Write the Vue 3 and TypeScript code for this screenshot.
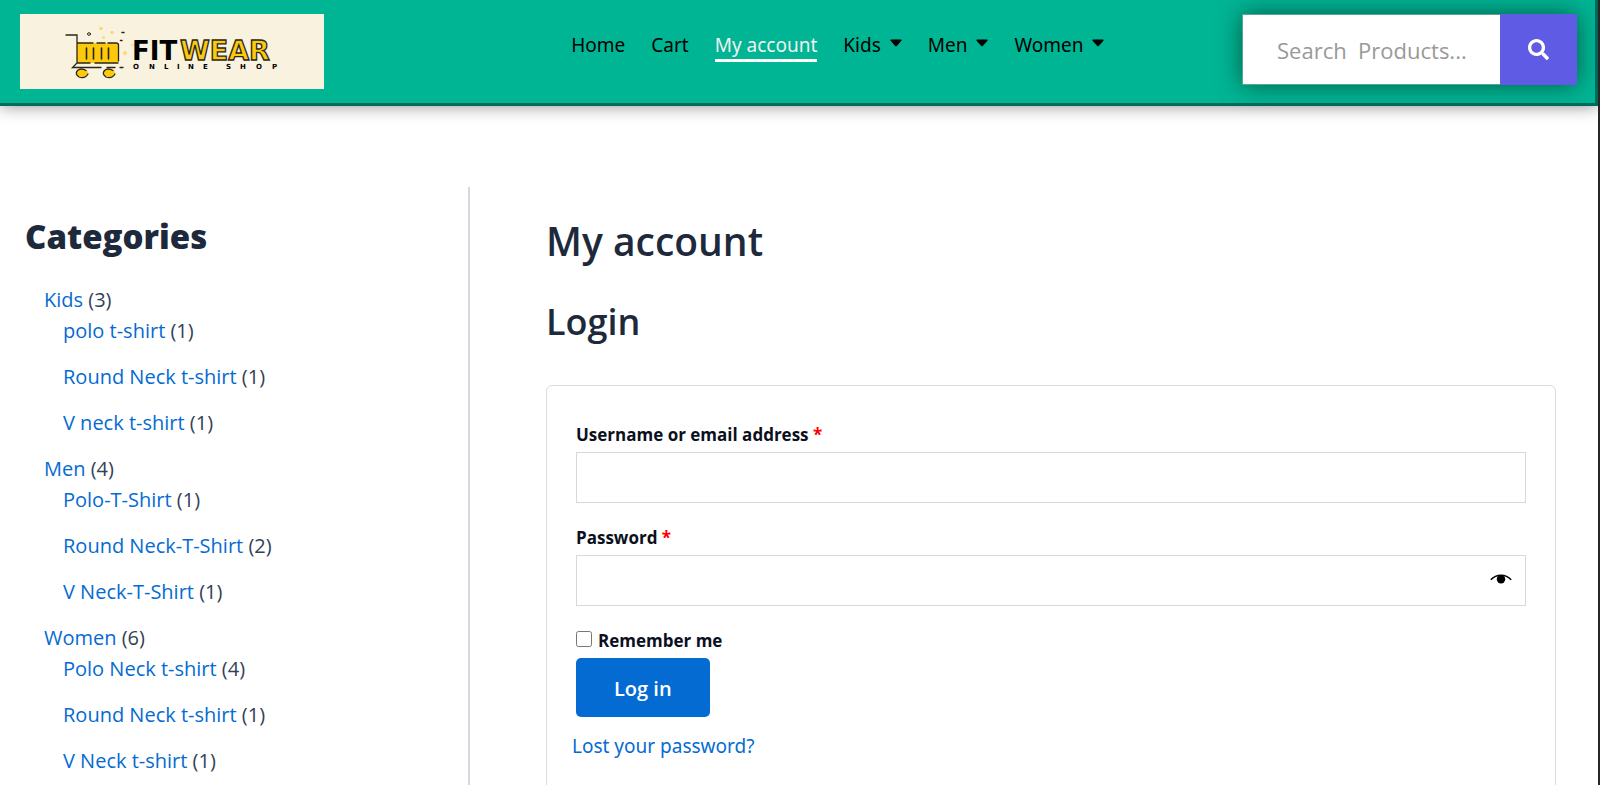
<script setup lang="ts">
import { ref } from 'vue'

interface NavItem {
  label: string
  active?: boolean
  menu?: boolean
}

interface Category {
  name: string
  count: number
  children?: Category[]
}

const nav: NavItem[] = [
  { label: 'Home' },
  { label: 'Cart' },
  { label: 'My account', active: true },
  { label: 'Kids', menu: true },
  { label: 'Men', menu: true },
  { label: 'Women', menu: true },
]

const categories: Category[] = [
  {
    name: 'Kids',
    count: 3,
    children: [
      { name: 'polo t-shirt', count: 1 },
      { name: 'Round Neck t-shirt', count: 1 },
      { name: 'V neck t-shirt', count: 1 },
    ],
  },
  {
    name: 'Men',
    count: 4,
    children: [
      { name: 'Polo-T-Shirt', count: 1 },
      { name: 'Round Neck-T-Shirt', count: 2 },
      { name: 'V Neck-T-Shirt', count: 1 },
    ],
  },
  {
    name: 'Women',
    count: 6,
    children: [
      { name: 'Polo Neck t-shirt', count: 4 },
      { name: 'Round Neck t-shirt', count: 1 },
      { name: 'V Neck t-shirt', count: 1 },
    ],
  },
]

const search = ref('')
const username = ref('')
const password = ref('')
const remember = ref(false)
const showPassword = ref(false)
</script>

<template>
  <div class="page">
    <header class="header">
      <a class="logo" href="#" aria-label="Fitwear Online Shop">
        <svg viewBox="0 0 304 75" width="304" height="75" aria-hidden="true">
          <g fill="#fdc90c">
            <rect x="57" y="29" width="41" height="20" rx="1" />
            <ellipse cx="62" cy="59" rx="6" ry="4" />
            <ellipse cx="89" cy="59" rx="6" ry="4" />
          </g>
          <g fill="none" stroke="#2b2618" stroke-width="1.3" stroke-linecap="round">
            <path d="M46 21H57V49M57 29H73M77 29H85M88 29H96Q98.500 29 98.500 31V47M57 49H70M75 49H98M57 49L52.500 53.500H81M87 53.500H95M100 53.500H103" />
            <path d="M66.500 34V45M73.500 34V45M81.500 34V45M88.500 34V45" stroke-width="1.600" />
            <path d="M66 56.500Q61 53.500 57.500 56.500Q54.500 60 59 63Q65 65 68 60M93 56.500Q88 53.500 84.500 56.500Q81.500 60 86 63Q92 65 95 60" />
            <ellipse cx="69" cy="20" rx="1.500" ry="1.300" stroke-width="1" />
            <path d="M102 18.500H104M100.500 26.500H102" stroke-width="1.500" />
          </g>
          <g fill="#fbe28a" stroke="#f7d04b" stroke-width=".8">
            <ellipse cx="81" cy="14.500" rx="1.500" ry="1" />
            <ellipse cx="92" cy="18.500" rx="1.500" ry="1" />
            <ellipse cx="83.500" cy="23.500" rx="1.300" ry=".8" />
            <ellipse cx="105" cy="39" rx="1.500" ry="1.500" />
            <path d="M111 31H115" />
          </g>
          <text x="112" y="46" class="logo-name">FIT</text>
          <text x="160" y="46" class="logo-name logo-wear">WEAR</text>
          <text x="113 129 144 157 168 183 206 206 220 236 252" y="55" class="logo-sub">ONLINE SHOP</text>
        </svg>
      </a>

      <nav class="nav" aria-label="Main">
        <a v-for="item in nav" :key="item.label" href="#" class="nav-link" :class="{ active: item.active }">
          {{ item.label }}
          <svg v-if="item.menu" class="caret" viewBox="0 0 12 8" width="12" height="8" aria-hidden="true">
            <path d="M1 .5H11Q12 .8 11.400 1.800L7 6.800Q6 7.800 5 6.800L.6 1.800Q0 .8 1 .5Z" fill="currentColor" />
          </svg>
        </a>
      </nav>

      <form class="search" role="search" @submit.prevent>
        <input v-model="search" type="text" aria-label="Search products" placeholder="Search&nbsp; Products..." />
        <button type="submit" aria-label="Search">
          <svg viewBox="0 0 512 512" width="21" height="21" aria-hidden="true">
            <path
              fill="currentColor"
              d="M505 442.700L405.300 343c-4.500-4.500-10.600-7-17-7H372c27.600-35.300 44-79.700 44-128C416 93.100 322.900 0 208 0S0 93.100 0 208s93.100 208 208 208c48.300 0 92.700-16.400 128-44v16.300c0 6.400 2.500 12.500 7 17l99.700 99.700c9.400 9.400 24.600 9.400 33.900 0l28.300-28.300c9.400-9.400 9.400-24.600.1-34zM208 336c-70.700 0-128-57.200-128-128 0-70.700 57.200-128 128-128 70.700 0 128 57.200 128 128 0 70.700-57.200 128-128 128z"
            />
          </svg>
        </button>
      </form>
    </header>

    <div class="content">
      <aside class="sidebar">
        <h2 class="side-title">Categories</h2>
        <ul class="cats">
          <li v-for="cat in categories" :key="cat.name">
            <a href="#">{{ cat.name }}</a> ({{ cat.count }})
            <ul class="subcats">
              <li v-for="sub in cat.children" :key="sub.name">
                <a href="#">{{ sub.name }}</a> ({{ sub.count }})
              </li>
            </ul>
          </li>
        </ul>
      </aside>

      <main class="main">
        <h1>My account</h1>
        <h2>Login</h2>
        <form class="card" @submit.prevent>
          <div class="field">
            <label for="username">Username or email address <span class="req">*</span></label>
            <input id="username" v-model="username" type="text" />
          </div>
          <div class="field">
            <label for="password">Password <span class="req">*</span></label>
            <div class="password">
              <input id="password" v-model="password" :type="showPassword ? 'text' : 'password'" />
              <button class="eye" type="button" aria-label="Show password" @click="showPassword = !showPassword">
                <svg viewBox="0 0 22 10" width="22" height="10" aria-hidden="true">
                  <path d="M.8 5.800Q5 1.300 11 1.300T21.200 5.800" fill="none" stroke="#000" stroke-width="1.500" />
                  <circle cx="11" cy="5.300" r="4.200" />
                </svg>
              </button>
            </div>
          </div>
          <label class="remember">
            <input v-model="remember" type="checkbox" />
            <span>Remember me</span>
          </label>
          <button class="submit" type="submit">Log in</button>
          <a class="lost" href="#">Lost your password?</a>
        </form>
      </main>
    </div>
  </div>
</template>

<style>
body {
  margin: 0;
  background: #fff;
}
</style>

<style scoped>
.page {
  box-sizing: border-box;
  height: 100vh;
  overflow: hidden;
  display: flex;
  flex-direction: column;
  border-right: 2px solid #262626;
  font-family: "Noto Sans", "Open Sans", sans-serif;
  font-size: 19px;
  color: #334155;
}

a {
  color: #046bd2;
  text-decoration: none;
}

.header {
  box-sizing: border-box;
  flex: none;
  display: grid;
  grid-template-columns: 7fr auto 6fr;
  align-items: start;
  padding: 14px 18px 14px 20px;
  background: #00b594;
  border-right: 3px solid #006a5b;
  border-bottom: 3px solid #006a5b;
  box-shadow: 0 0 16px rgba(0, 0, 0, 0.45);
}

.logo {
  display: block;
  justify-self: start;
  height: 75px;
  background: #f8f2df;
}

.logo svg {
  display: block;
}

.logo-name {
  font-family: "DejaVu Sans", sans-serif;
  font-weight: 700;
  font-size: 26px;
}

.logo-wear {
  font-size: 27px;
  fill: #fdc90c;
  stroke: #2b2618;
  stroke-width: 1.3px;
}

.logo-sub {
  font-family: "DejaVu Sans", sans-serif;
  font-weight: 700;
  font-size: 7px;
}

.nav {
  display: flex;
  gap: 26px;
  padding-top: 17px;
}

.nav-link {
  display: flex;
  align-items: center;
  gap: 9px;
  line-height: 28px;
  color: #000;
  border-bottom: 3px solid transparent;
}

.nav-link.active {
  color: #f1f1f1;
  border-bottom-color: #fff;
}

.caret {
  margin-bottom: 4px;
}

.search {
  justify-self: end;
  display: flex;
  height: 71px;
  box-shadow: 0 0 24px rgba(0, 0, 0, 0.5);
}

.search input {
  box-sizing: border-box;
  width: 258px;
  padding: 0 10px 0 34px;
  border: 1px solid #5aa894;
  border-right: 0;
  border-radius: 0;
  background: #fff;
  font: inherit;
  font-family: "Open Sans", sans-serif;
  font-size: 22px;
  color: #333;
  outline: 0;
}

.search input::placeholder {
  color: #999;
}

.search button {
  display: grid;
  place-items: center;
  width: 77px;
  padding: 0;
  border: 0;
  background: #605be5;
  color: #fff;
}

.content {
  flex: 1;
  min-height: 0;
  display: flex;
  padding-top: 81px;
}

.sidebar {
  box-sizing: border-box;
  flex: 0 0 470px;
  padding: 27px 24px 0 25px;
  border-right: 2px solid #d5d8df;
}

.side-title {
  margin: 0 0 24px;
  font-family: "Open Sans", sans-serif;
  font-size: 33px;
  line-height: 46px;
  font-weight: 800;
  color: #1e293b;
}

.cats,
.subcats {
  margin: 0;
  padding: 0 0 0 19px;
  list-style: none;
  font-family: "Open Sans", sans-serif;
  font-size: 20px;
  line-height: 31px;
}

.subcats li {
  margin-bottom: 15px;
}

.main {
  flex: 1;
  min-width: 0;
  padding: 28px 42px 0 76px;
}

h1,
.main h2 {
  margin: 0;
  font-family: "Open Sans", sans-serif;
  font-weight: 600;
  color: #1e293b;
}

h1 {
  font-size: 39px;
  line-height: 52px;
}

.main h2 {
  margin: 32px 0 40px;
  font-size: 36px;
  line-height: 46px;
}

.card {
  display: flex;
  flex-direction: column;
  align-items: flex-start;
  padding: 32px 29px 80px;
  border: 1px solid #dbdde4;
  border-radius: 6px;
}

.field {
  width: 100%;
  margin-bottom: 18px;
}

.field label {
  display: block;
  margin-bottom: 1px;
  line-height: 33px;
}

.field label,
.remember {
  font-family: "Open Sans", sans-serif;
  font-size: 17px;
  font-weight: 700;
  color: #0b1020;
}

.req {
  color: #f00;
}

.field input {
  display: block;
  box-sizing: border-box;
  width: 100%;
  height: 51px;
  padding: 0 14px;
  border: 1px solid #d5d8df;
  border-radius: 0;
  font: inherit;
  outline: 0;
}

.password {
  position: relative;
}

.eye {
  position: absolute;
  top: 0;
  right: 0;
  display: grid;
  place-items: center;
  width: 50px;
  height: 48px;
  padding: 0;
  border: 0;
  background: none;
}

.remember {
  display: flex;
  align-items: center;
  gap: 6px;
  line-height: 34px;
}

.remember input {
  width: 16px;
  height: 16px;
  margin: 0 0 4px;
}

.submit {
  height: 59px;
  padding: 2px 38px 0;
  border: 0;
  border-radius: 5px;
  background: #046bd2;
  color: #fff;
  font: inherit;
  font-family: "Open Sans", sans-serif;
  font-size: 20px;
  font-weight: 600;
}

.lost {
  margin: 14px 0 0 -4px;
  line-height: 31px;
}
</style>
